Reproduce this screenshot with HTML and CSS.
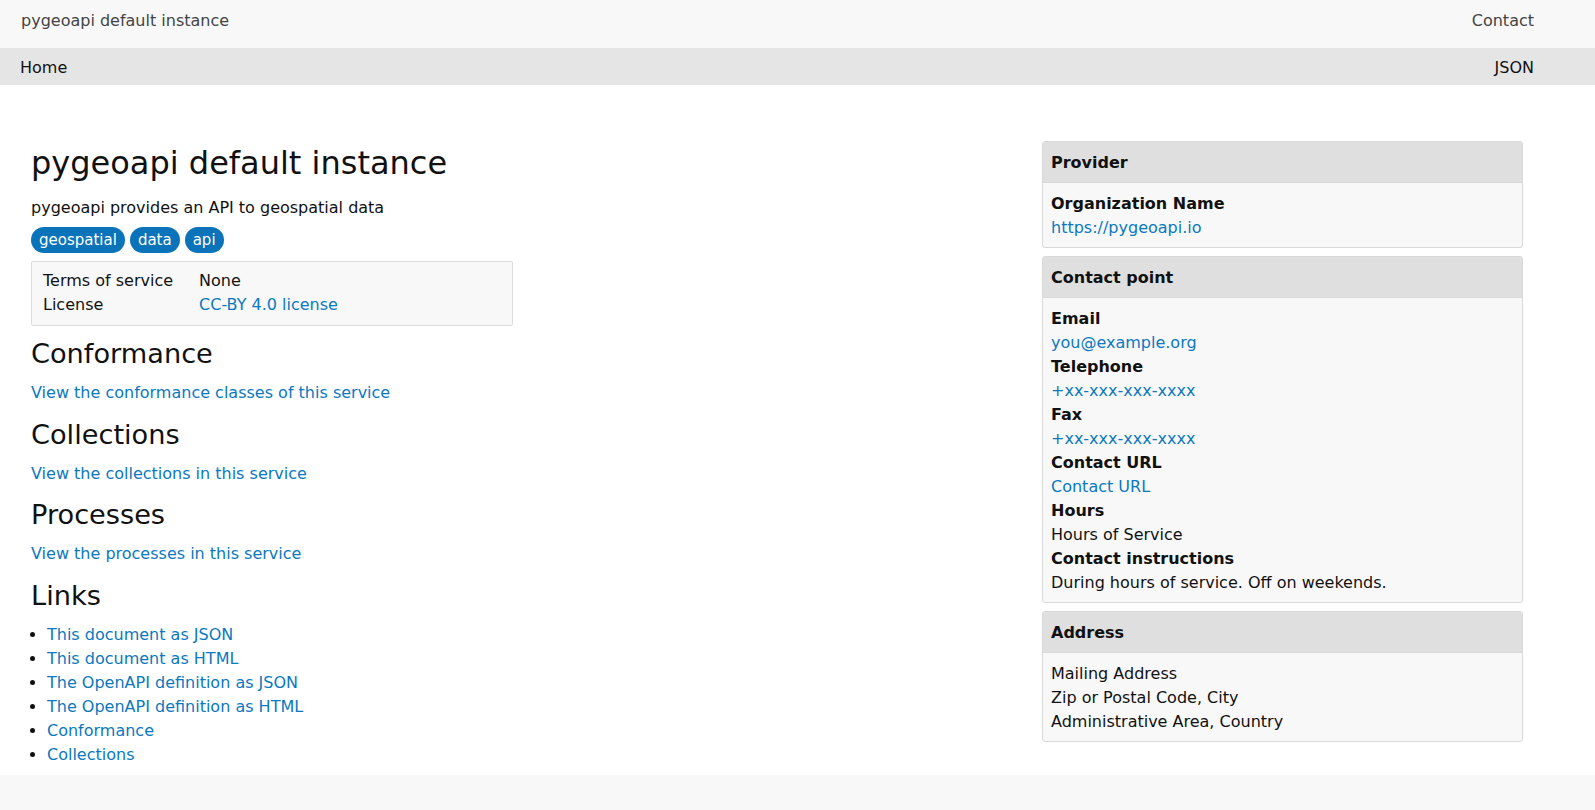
FILE: index.html
```html
<!DOCTYPE html>
<html lang="en">
<head>
<meta charset="utf-8">
<title>pygeoapi default instance</title>
<link rel="stylesheet" href="styles.css">
</head>
<body>
<header class="topbar">
  <a class="brand" href="#">pygeoapi default instance</a>
  <a class="toplink" href="#">Contact</a>
</header>
<nav class="crumbs">
  <a href="#">Home</a>
  <a href="#">JSON</a>
</nav>
<main class="page">
  <section class="main-col">
    <h1 class="title">pygeoapi default instance</h1>
    <p class="lead">pygeoapi provides an API to geospatial data</p>
    <div class="badges">
      <span class="badge">geospatial</span>
      <span class="badge">data</span>
      <span class="badge">api</span>
    </div>
    <div class="terms">
      <span>Terms of service</span><span>None</span>
      <span>License</span><a href="#">CC-BY 4.0 license</a>
    </div>
    <h2>Conformance</h2>
    <p><a href="#">View the conformance classes of this service</a></p>
    <h2>Collections</h2>
    <p><a href="#">View the collections in this service</a></p>
    <h2>Processes</h2>
    <p><a href="#">View the processes in this service</a></p>
    <h2>Links</h2>
    <ul class="links">
      <li><a href="#">This document as JSON</a></li>
      <li><a href="#">This document as HTML</a></li>
      <li><a href="#">The OpenAPI definition as JSON</a></li>
      <li><a href="#">The OpenAPI definition as HTML</a></li>
      <li><a href="#">Conformance</a></li>
      <li><a href="#">Collections</a></li>
    </ul>
  </section>
  <aside class="side-col">
    <div class="card">
      <div class="card-head">Provider</div>
      <div class="card-body">
        <b>Organization Name</b>
        <a href="#">https://pygeoapi.io</a>
      </div>
    </div>
    <div class="card">
      <div class="card-head">Contact point</div>
      <div class="card-body">
        <b>Email</b>
        <a href="#">you@example.org</a>
        <b>Telephone</b>
        <a href="#">+xx-xxx-xxx-xxxx</a>
        <b>Fax</b>
        <a href="#">+xx-xxx-xxx-xxxx</a>
        <b>Contact URL</b>
        <a href="#">Contact URL</a>
        <b>Hours</b>
        <span>Hours of Service</span>
        <b>Contact instructions</b>
        <span>During hours of service. Off on weekends.</span>
      </div>
    </div>
    <div class="card">
      <div class="card-head">Address</div>
      <div class="card-body">
        <span>Mailing Address</span>
        <span>Zip or Postal Code, City</span>
        <span>Administrative Area, Country</span>
      </div>
    </div>
  </aside>
</main>
<footer class="foot"></footer>
</body>
</html>
```
FILE: styles.css
```css
* { box-sizing: border-box; }
html, body { margin: 0; padding: 0; }
body {
  font-family: "DejaVu Sans", sans-serif;
  font-size: 16px;
  line-height: 24px;
  color: #111;
  background: #fff;
}
a { color: #0b78c0; text-decoration: none; }

.topbar {
  display: flex;
  justify-content: space-between;
  align-items: flex-start;
  height: 49px;
  padding: 9px 61px 0 21px;
  background: #f8f8f8;
  border-bottom: 1px solid #e4e4e4;
}
.topbar a { color: #444; }

.crumbs {
  display: flex;
  justify-content: space-between;
  align-items: flex-start;
  height: 36px;
  padding: 7px 61px 0 20px;
  background: #e5e5e5;
}
.crumbs a { color: #111; }

.page {
  display: flex;
  justify-content: space-between;
  padding: 59px 72px 8px 31px;
}
.main-col { width: 482px; }
.side-col { width: 481px; display: flex; flex-direction: column; gap: 8px; margin-top: -3px; }

.title {
  font-size: 32px;
  font-weight: normal;
  line-height: 38px;
  margin: 0 0 14px;
}
.lead { margin: 0 0 7px; }
p { margin: 0; }

.badges { display: flex; gap: 5px; margin-bottom: 8px; }
.badge {
  background: #0a73ba;
  color: #fff;
  font-size: 15px;
  line-height: 26px;
  height: 26px;
  padding: 0 8px;
  border-radius: 13px;
}

.terms {
  display: grid;
  grid-template-columns: auto 1fr;
  column-gap: 26px;
  padding: 7px 11px 8px;
  margin-bottom: -1.5px;
  background: #f8f8f8;
  border: 1px solid #ddd;
  border-radius: 2px;
}

h2 {
  font-size: 27.2px;
  font-weight: normal;
  line-height: 33px;
  margin: 12.5px 0 11px;
}

.links { margin: 0; padding-left: 16px; }

.card {
  border: 1px solid #d9d9d9;
  border-radius: 3px;
  background: #f8f8f8;
  overflow: hidden;
}
.card-head {
  background: #dfdfdf;
  font-weight: bold;
  padding: 9px 8px 7px;
  border-bottom: 1px solid #d9d9d9;
}
.card-body {
  display: flex;
  flex-direction: column;
  align-items: flex-start;
  padding: 9px 8px 7px;
}

.foot {
  height: 60px;
  background: #f8f8f8;
}
```
